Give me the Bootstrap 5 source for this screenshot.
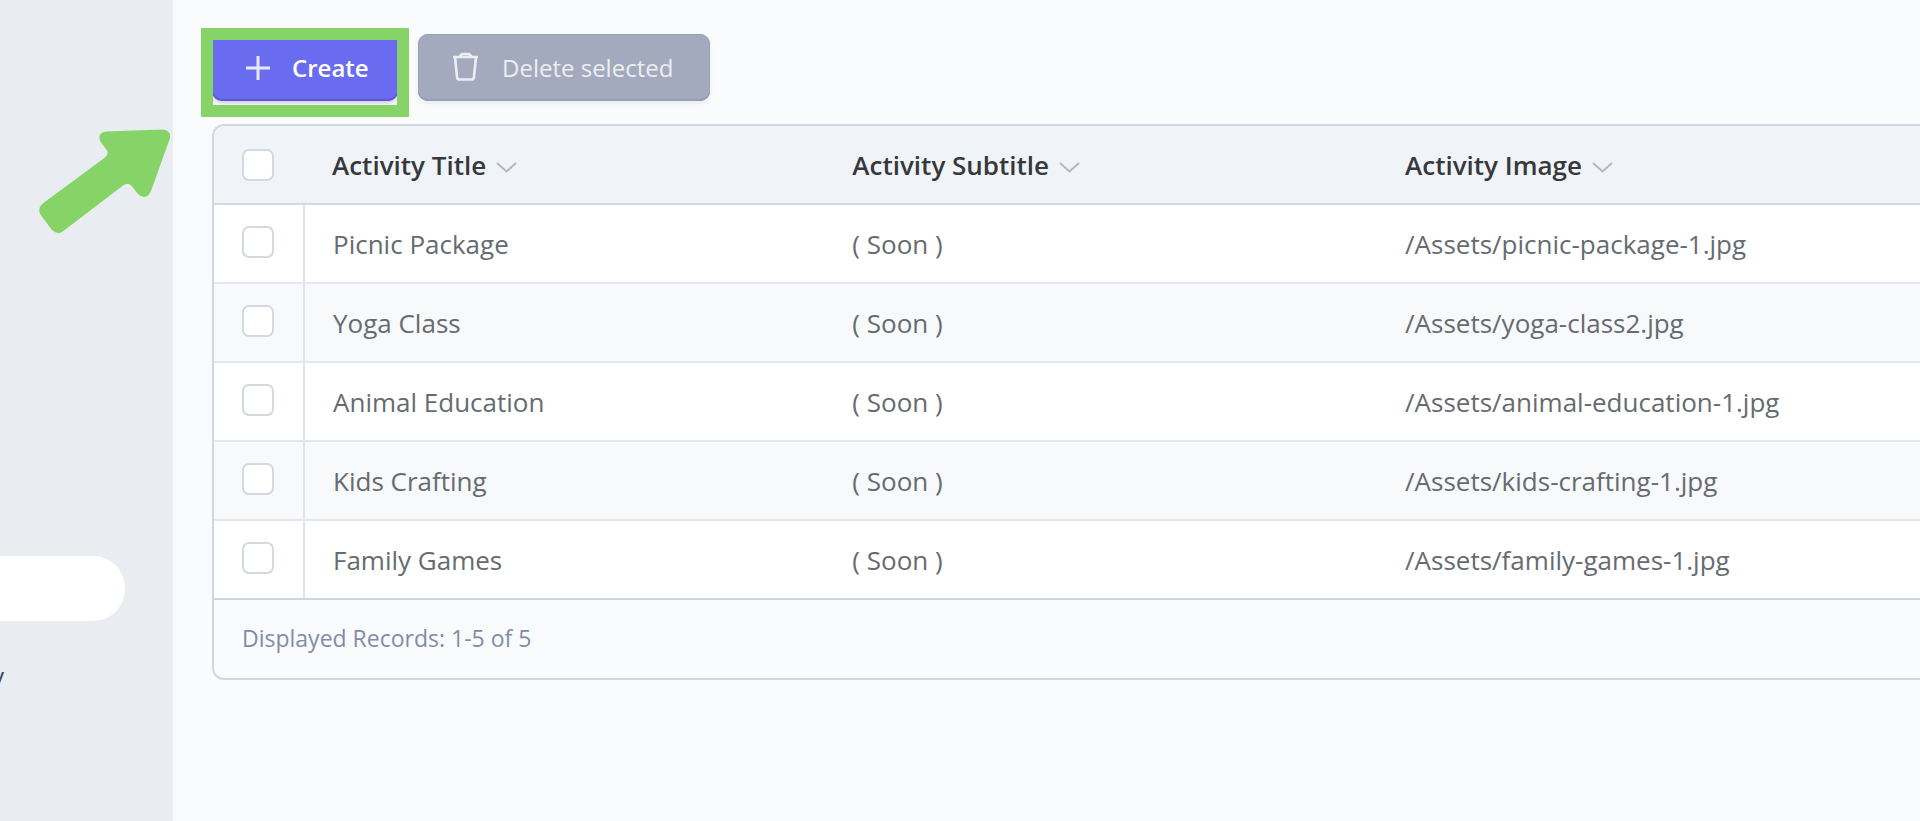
<!DOCTYPE html>
<html lang="en">
<head>
<meta charset="utf-8">
<meta name="viewport" content="width=device-width, initial-scale=1">
<title>Activities</title>
<link href="https://cdn.jsdelivr.net/npm/bootstrap@5.3.0/dist/css/bootstrap.min.css" rel="stylesheet">
<style>
  body { font-family: "Open Sans", "Noto Sans", sans-serif; font-size: 26px; line-height: 36px; background: #fafbfd; color: #666b70; }
  .side-panel { width: 173px; background: #e9edf2; padding-top: 556px; }
  .side-pill { height: 65px; margin-right: 48px; background: #fff; border-radius: 0 32px 32px 0; }
  .side-link { width: 4px; margin-top: 37px; color: #3b4a63; font-size: 24px; }
  .content-area { padding: 34px 0 48px 39px; min-width: 0; }
  .tool-bar { gap: 20px; margin-bottom: 23px; }
  .tool-btn { height: 67px; padding: 0 32px; gap: 22px; border: 0; border-radius: 10px; font-size: 24px; line-height: 36px; color: #fff; white-space: nowrap; }
  .tool-btn svg { flex: none; }
  .btn-create { width: 186px; font-weight: 600; background: #696cee; box-shadow: inset 0 -2px 0 #5a59d8, 0 2px 4px rgba(60,60,120,.25); }
  .btn-create:hover { background: #5f62e4; color: #fff; }
  .btn-remove, .btn-remove:disabled { width: 292px; background: #a4aabd; color: #eceef2; opacity: 1; box-shadow: inset 0 -2px 0 #979db6, inset 0 0 0 1px #9ba2b8, 0 3px 5px rgba(60,60,120,.08); }
  .callout-box { position: absolute; inset: -6px -11px -16px; border: 12px solid #86d467; pointer-events: none; }
  .callout-arrow { position: absolute; left: 38px; top: 128px; pointer-events: none; }
  .grid-panel { border: 2px solid #d0d7df; border-right: 0; border-radius: 12px 0 0 12px; overflow: hidden; }
  .grid-table { table-layout: fixed; }
  .grid-table th, .grid-table td { height: 79px; padding: 0 28px; vertical-align: middle; white-space: nowrap; border-bottom: 2px solid #e3e8ee; }
  .grid-table th { height: 78px; font-weight: 600; color: #36383c; background: #f0f3f8; border-color: #d3d9e1; }
  .grid-table th svg { margin-left: 3px; vertical-align: 1px; }
  .grid-table tbody td { background: #fff; }
  .grid-table tbody tr:nth-child(even) td { background: #f7f9fb; }
  .grid-table tbody tr:last-child td { border-bottom-color: #ccd4dd; }
  .grid-table tbody td:first-child { border-right: 2px solid #dfe4eb; }
  .col-pick { width: 90px; }
  .col-title { width: 30.5%; }
  .col-sub { width: 32.4%; }
  .pick-box.form-check-input { display: block; width: 32px; height: 32px; margin: 0; border: 2px solid #d3d9e1; border-radius: 7px; background-color: #fff; }
  tbody .pick-box.form-check-input { margin-bottom: 4px; }
  .grid-foot { height: 78px; padding: 0 28px 2px; font-size: 23px; color: #848ba9; }
</style>
</head>
<body>
<div class="d-flex min-vh-100 position-relative overflow-hidden">
  <nav class="side-panel flex-shrink-0" aria-label="Main">
    <div class="side-pill"></div>
    <div class="side-link d-flex justify-content-end"><span>y</span></div>
  </nav>

  <main class="content-area flex-grow-1">
    <div class="tool-bar d-flex">
      <div class="position-relative">
        <button type="button" class="btn tool-btn btn-create d-flex align-items-center">
          <svg width="26" height="26" viewBox="0 0 26 26" fill="none" stroke="#fff" stroke-opacity=".85" stroke-width="3"><path d="M14 1v24M2 13h24"/></svg>
          <span>Create</span>
        </button>
        <div class="callout-box"></div>
      </div>
      <button type="button" class="btn tool-btn btn-remove d-flex align-items-center" disabled>
        <svg width="30" height="32" viewBox="0 0 30 32" fill="none" stroke="#eceef2" stroke-width="2.600" stroke-linejoin="round"><path d="M3 5h25M9.500 4.500 12 2h7l2.500 2.500M5 5l2 20q.3 2.500 2.500 2.500h12q2.200 0 2.500-2.500l2-20"/></svg>
        <span>Delete selected</span>
      </button>
    </div>

    <section class="grid-panel">
      <table class="grid-table w-100">
        <colgroup><col class="col-pick"><col class="col-title"><col class="col-sub"><col></colgroup>
        <thead>
          <tr>
            <th><input class="form-check-input pick-box" type="checkbox" aria-label="Select all"></th>
            <th>Activity Title <svg width="21" height="12" viewBox="0 0 21 12" fill="none" stroke="#b4b7bc" stroke-width="2"><path d="m1 1 9.500 8.500L20 1"/></svg></th>
            <th>Activity Subtitle <svg width="21" height="12" viewBox="0 0 21 12" fill="none" stroke="#b4b7bc" stroke-width="2"><path d="m1 1 9.500 8.500L20 1"/></svg></th>
            <th>Activity Image <svg width="21" height="12" viewBox="0 0 21 12" fill="none" stroke="#b4b7bc" stroke-width="2"><path d="m1 1 9.500 8.500L20 1"/></svg></th>
          </tr>
        </thead>
        <tbody>
          <tr><td><input class="form-check-input pick-box" type="checkbox" aria-label="Select Picnic Package"></td><td>Picnic Package</td><td>( Soon )</td><td>/Assets/picnic-package-1.jpg</td></tr>
          <tr><td><input class="form-check-input pick-box" type="checkbox" aria-label="Select Yoga Class"></td><td>Yoga Class</td><td>( Soon )</td><td>/Assets/yoga-class2.jpg</td></tr>
          <tr><td><input class="form-check-input pick-box" type="checkbox" aria-label="Select Animal Education"></td><td>Animal Education</td><td>( Soon )</td><td>/Assets/animal-education-1.jpg</td></tr>
          <tr><td><input class="form-check-input pick-box" type="checkbox" aria-label="Select Kids Crafting"></td><td>Kids Crafting</td><td>( Soon )</td><td>/Assets/kids-crafting-1.jpg</td></tr>
          <tr><td><input class="form-check-input pick-box" type="checkbox" aria-label="Select Family Games"></td><td>Family Games</td><td>( Soon )</td><td>/Assets/family-games-1.jpg</td></tr>
        </tbody>
      </table>
      <div class="grid-foot d-flex align-items-center">Displayed Records: 1-5 of 5</div>
    </section>
  </main>

  <svg class="callout-arrow" width="134" height="108" viewBox="0 0 134 108" fill="#86d467" aria-hidden="true">
    <path d="M68 3.500 124 1.500Q133 2 132 10L113 63Q108 73 100 66L95 59.500Q91 53 85 57.500L26 102.500Q20 108 14 102L3 87.500Q-1 81 4 76L67 29.500Q71 26 69 22.500L63 14.500Q58 5 68 3.500Z"/>
  </svg>
</div>
<script src="https://cdn.jsdelivr.net/npm/bootstrap@5.3.0/dist/js/bootstrap.bundle.min.js"></script>
</body>
</html>
